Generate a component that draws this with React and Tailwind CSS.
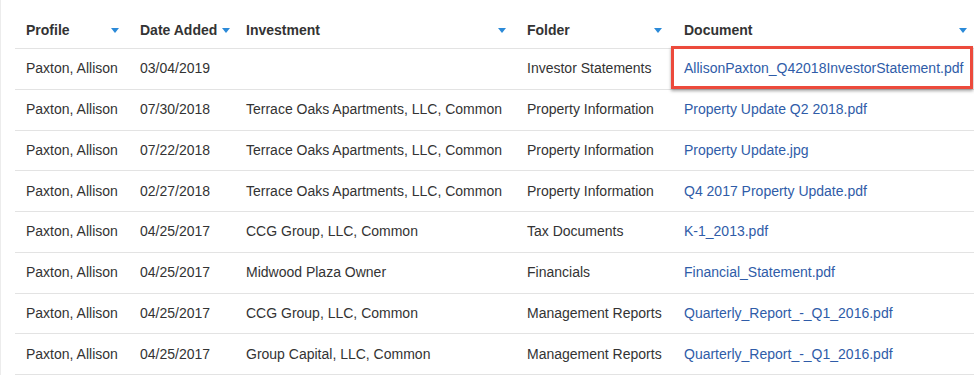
import React from "react";

const rows = [
  ["Paxton, Allison", "03/04/2019", "", "Investor Statements", "AllisonPaxton_Q42018InvestorStatement.pdf", true],
  ["Paxton, Allison", "07/30/2018", "Terrace Oaks Apartments, LLC, Common", "Property Information", "Property Update Q2 2018.pdf"],
  ["Paxton, Allison", "07/22/2018", "Terrace Oaks Apartments, LLC, Common", "Property Information", "Property Update.jpg"],
  ["Paxton, Allison", "02/27/2018", "Terrace Oaks Apartments, LLC, Common", "Property Information", "Q4 2017 Property Update.pdf"],
  ["Paxton, Allison", "04/25/2017", "CCG Group, LLC, Common", "Tax Documents", "K-1_2013.pdf"],
  ["Paxton, Allison", "04/25/2017", "Midwood Plaza Owner", "Financials", "Financial_Statement.pdf"],
  ["Paxton, Allison", "04/25/2017", "CCG Group, LLC, Common", "Management Reports", "Quarterly_Report_-_Q1_2016.pdf"],
  ["Paxton, Allison", "04/25/2017", "Group Capital, LLC, Common", "Management Reports", "Quarterly_Report_-_Q1_2016.pdf"],
];

const Arrow = () => (
  <svg width="8" height="5" viewBox="0 0 8 5" className="shrink-0">
    <path d="M0 0 L8 0 L4 5 Z" fill="#2b8ad8" />
  </svg>
);

const cols = "grid grid-cols-[114px_106px_281px_157px_301px]";

export default function App() {
  return (
    <div
      className="w-[974px] h-[375px] bg-white overflow-hidden border-l border-[#ececec] text-[14px] text-[#333]"
      style={{ fontFamily: '"Liberation Sans", Arial, sans-serif' }}
    >
      <div className="ml-[14px]">
        <div className={`${cols} h-[49px] border-b border-[#e3e3e3] items-center pt-[13px] font-bold`}>
          <div className="flex items-center justify-between pl-[11px] pr-[10px]">
            <span>Profile</span>
            <Arrow />
          </div>
          <div className="flex items-center gap-[5px] pl-[11px]">
            <span>Date Added</span>
            <Arrow />
          </div>
          <div className="flex items-center justify-between pl-[11px] pr-[10px]">
            <span>Investment</span>
            <Arrow />
          </div>
          <div className="flex items-center justify-between pl-[11px] pr-[11px]">
            <span>Folder</span>
            <Arrow />
          </div>
          <div className="flex items-center justify-between pl-[11px] pr-[7px]">
            <span>Document</span>
            <Arrow />
          </div>
        </div>
        {rows.map((r, i) => (
          <div key={i} className={`${cols} h-[40.75px] border-b border-[#e3e3e3] items-center`}>
            <div className="pl-[11px] whitespace-nowrap">{r[0]}</div>
            <div className="pl-[11px] whitespace-nowrap">{r[1]}</div>
            <div className="pl-[11px] whitespace-nowrap">{r[2]}</div>
            <div className="pl-[11px] whitespace-nowrap">{r[3]}</div>
            <div className="relative h-full flex items-center pl-[11px] whitespace-nowrap">
              {r[5] && (
                <div className="absolute left-[-2px] top-[-3px] w-[302px] h-[43px] border-[3px] border-[#ec4a3c] shadow-[0_2px_3px_rgba(0,0,0,0.35)]" />
              )}
              <span className="relative text-[#2f5ca8]">{r[4]}</span>
            </div>
          </div>
        ))}
      </div>
    </div>
  );
}
